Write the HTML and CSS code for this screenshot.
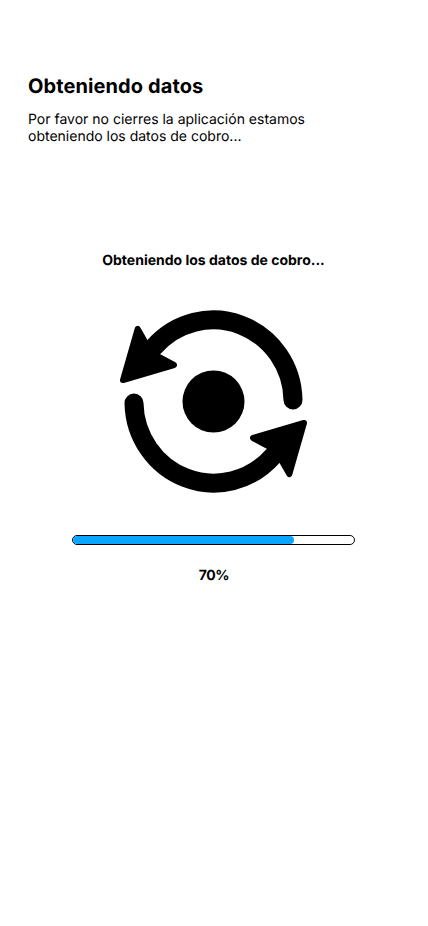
FILE: index.html
```html
<!DOCTYPE html>
<html lang="es">
<head>
<meta charset="utf-8">
<meta name="viewport" content="width=device-width, initial-scale=1">
<title>Obteniendo datos</title>
<link rel="stylesheet" href="styles.css">
</head>
<body>
<main class="screen">
  <header class="intro">
    <h1 class="title">Obteniendo datos</h1>
    <p class="description">Por favor no cierres la aplicación estamos<br>obteniendo los datos de cobro...</p>
  </header>
  <section class="loading">
    <h2 class="status">Obteniendo los datos de cobro...</h2>
    <svg class="sync" viewBox="0 0 188 184" aria-hidden="true">
      <circle cx="93.5" cy="92.5" r="31"/>
      <g id="arrow">
        <path class="arc" d="M173 91A79.7 81.5 0 0 0 34 38"/>
        <path class="head" d="M17.7 19.9L3 71L54 56L38 47.5L28 38Z"/>
      </g>
      <use href="#arrow" transform="rotate(180 93.5 92.5)"/>
    </svg>
    <div class="track" role="progressbar" aria-valuenow="70" aria-valuemin="0" aria-valuemax="100"><div class="fill"></div></div>
    <p class="percent">70%</p>
  </section>
</main>
</body>
</html>
```
FILE: styles.css
```css
* { box-sizing: border-box; }
body { margin: 0; background: #fff; color: #000; font-family: Inter, sans-serif; text-rendering: geometricPrecision; }
.screen { min-height: 926px; padding: 74px 29px 0 28px; }
.title { margin: 0; font-size: 20px; line-height: 24px; font-weight: 700; letter-spacing: .1px; }
.description { margin: 13px 0 0; font-size: 14px; line-height: 17px; font-weight: 400; }
.loading { display: flex; flex-direction: column; align-items: center; padding-top: 107px; }
.status, .percent { margin: 0; font-size: 14px; line-height: 17px; font-weight: 700; }
.sync { width: 188px; height: 184px; margin: 40px 0 0 1px; }
.arc { fill: none; stroke: #000; stroke-width: 19; stroke-linecap: round; }
.head { stroke: #000; stroke-width: 6; stroke-linejoin: round; }
.track { width: 283.5px; height: 10px; margin: 42px 0 0; border: 1px solid #000; border-radius: 5px; overflow: hidden; }
.fill { width: 221.5px; height: 100%; background: #0aa5ff; border-radius: 4px; }
.percent { margin: 22px 0 0 1px; letter-spacing: -.4px; }
```
